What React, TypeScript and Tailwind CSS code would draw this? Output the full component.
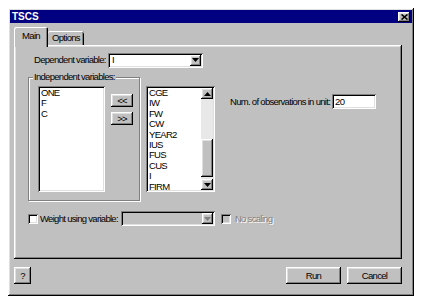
import React from "react";

const raised =
  "shadow-[inset_-1px_-1px_#000,inset_1px_1px_#fff,inset_-2px_-2px_#808080,inset_2px_2px_#dfdfdf]";
const sunken =
  "shadow-[inset_1px_1px_#808080,inset_-1px_-1px_#fff,inset_2px_2px_#000,inset_-2px_-2px_#dfdfdf]";
const font = "font-['Liberation_Sans',Arial,sans-serif] text-[9.5px] tracking-[-0.7px] leading-[10px]";

function Arrow({ up, gray }: { up?: boolean; gray?: boolean }) {
  return (
    <svg width="7" height="4" viewBox="0 0 7 4">
      <polygon
        points={up ? "0,4 7,4 3.5,0" : "0,0 7,0 3.5,4"}
        fill={gray ? "#808080" : "#000"}
      />
    </svg>
  );
}

function Combo({ width, value, disabled }: { width: string; value?: string; disabled?: boolean }) {
  return (
    <div
      className={`${width} h-[15px] flex items-stretch p-[2px] ${sunken} ${
        disabled ? "bg-[#c0c0c0]" : "bg-white"
      }`}
    >
      <div className="flex-1 pl-[2px] flex items-center">{value}</div>
      <div className={`w-[11px] flex items-center justify-center bg-[#c0c0c0] ${raised}`}>
        <Arrow gray={disabled} />
      </div>
    </div>
  );
}

function Button({ label, className }: { label: string; className: string }) {
  return (
    <div className={`flex items-center justify-center bg-[#c0c0c0] ${raised} ${className}`}>
      {label}
    </div>
  );
}

function Checkbox({ disabled }: { disabled?: boolean }) {
  return (
    <div className={`w-[10px] h-[10px] ${sunken} ${disabled ? "bg-[#c0c0c0]" : "bg-white"}`} />
  );
}

const rightItems = ["CGE", "IW", "FW", "CW", "YEAR2", "IUS", "FUS", "CUS", "I", "FIRM"];

export default function App() {
  return (
    <div className={`w-[422px] h-[304px] bg-white pl-[8px] pt-[8px] text-black ${font}`}>
      <div className={`w-[406px] h-[288px] bg-[#c0c0c0] p-[2px] flex flex-col ${raised}`}>
        {/* Title bar */}
        <div className="h-[13px] bg-[#000080] flex items-center justify-between pl-[2px] pr-[2px]">
          <span className="text-white font-bold tracking-normal text-[10px]">TSCS</span>
          <div className={`w-[12px] h-[10px] bg-[#c0c0c0] flex items-center justify-center ${raised}`}>
            <svg width="7" height="6" viewBox="0 0 7 6">
              <path d="M0.5 0.5 L6.5 5.5 M6.5 0.5 L0.5 5.5" stroke="#000" strokeWidth="1.6" />
            </svg>
          </div>
        </div>

        {/* Tabs */}
        <div className="mt-[4px] ml-[4px] h-[18px] flex items-end">
          <div className="relative z-10 -mb-[2px] h-[20px] w-[34px] bg-[#c0c0c0] rounded-t-[2px] shadow-[inset_1px_1px_#fff,inset_-1px_0_#000,inset_-2px_0_#808080] flex items-start justify-center pt-[4px]">
            Main
          </div>
          <div className="h-[14px] w-[36px] bg-[#c0c0c0] rounded-t-[2px] shadow-[inset_0_1px_#fff,inset_-1px_0_#000,inset_-2px_0_#808080] flex items-center justify-center">
            Options
          </div>
        </div>

        {/* Panel */}
        <div className={`ml-[4px] w-[388px] h-[214px] bg-[#c0c0c0] flex flex-col pt-[8px] ${raised}`}>
          {/* Dependent variable */}
          <div className="ml-[20px] flex items-center h-[14px]">
            <span className="w-[74px]">Dependent variable:</span>
            <Combo width="w-[95px]" value="I" />
          </div>

          <div className="mt-[10px] flex items-start">
            {/* Group box */}
            <div className="relative ml-[14px] w-[112px] h-[124px] border border-[#808080] shadow-[inset_1px_1px_#fff,1px_1px_#fff] pl-[9px] pt-[8px] flex items-start">
              <span className="absolute -top-[6px] left-[4px] px-[1px] bg-[#c0c0c0]">
                Independent variables:
              </span>
              <div className={`w-[67px] h-[106px] bg-white pl-[3px] pt-[2px] leading-[10.4px] ${sunken}`}>
                <div>ONE</div>
                <div>F</div>
                <div>C</div>
              </div>
              <div className="ml-[6px] mt-[8px] flex flex-col gap-[5px]">
                <Button label="<<" className="w-[22px] h-[13px]" />
                <Button label=">>" className="w-[22px] h-[13px]" />
              </div>
            </div>

            {/* Right list */}
            <div className={`ml-[6px] mt-[9px] w-[69px] h-[106px] bg-white p-[2px] flex ${sunken}`}>
              <div className="flex-1 pl-[1px] leading-[10.4px]">
                {rightItems.map((it) => (
                  <div key={it}>{it}</div>
                ))}
              </div>
              <div className="w-[12px] flex flex-col">
                <div className={`h-[11px] bg-[#c0c0c0] flex items-center justify-center ${raised}`}>
                  <Arrow up />
                </div>
                <div className="h-[40px] bg-[#e8e8e8]" />
                <div className={`h-[38px] bg-[#c0c0c0] ${raised}`} />
                <div className="flex-1 bg-[#e8e8e8]" />
                <div className={`h-[11px] bg-[#c0c0c0] flex items-center justify-center ${raised}`}>
                  <Arrow />
                </div>
              </div>
            </div>

            {/* Observations */}
            <div className="ml-[15px] mt-[17px] flex items-center">
              <span>Num. of observations in unit:</span>
              <div className={`ml-[2px] w-[44px] h-[15px] bg-white pl-[3px] flex items-center ${sunken}`}>
                20
              </div>
            </div>
          </div>

          {/* Weight row */}
          <div className="mt-[10px] ml-[14px] flex items-center h-[15px]">
            <Checkbox />
            <span className="ml-[2px]">Weight using variable:</span>
            <div className="ml-[3px]">
              <Combo width="w-[94px]" disabled />
            </div>
            <div className="ml-[6px]">
              <Checkbox disabled />
            </div>
            <span className="ml-[4px] text-[#808080] [text-shadow:1px_1px_#fff]">No scaling</span>
          </div>
        </div>

        {/* Bottom buttons */}
        <div className="mt-[8px] ml-[4px] w-[388px] flex items-center">
          <Button label="?" className="w-[17px] h-[17px]" />
          <Button label="Run" className="ml-auto w-[55px] h-[17px]" />
          <Button label="Cancel" className="ml-[6px] w-[55px] h-[17px]" />
        </div>
      </div>
    </div>
  );
}
